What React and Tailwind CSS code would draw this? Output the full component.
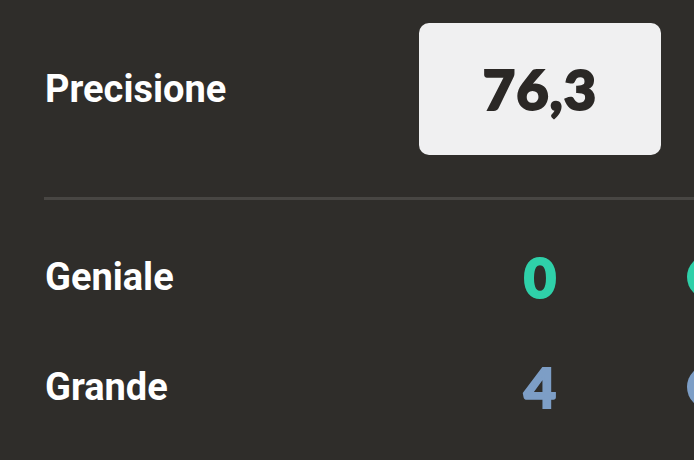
export default function App() {
  const label = { fontFamily: "Roboto, 'Liberation Sans', sans-serif" };
  const num = { fontFamily: "Lato, 'DejaVu Sans', sans-serif" };
  return (
    <div className="w-[694px] h-[460px] overflow-hidden bg-[#2f2d2a] pt-[23px]">
      <div className="grid grid-cols-[374px_242px_1fr] items-center pl-[45px]">
        <div style={label} className="text-[38px] font-bold text-white leading-none">Precisione</div>
        <div className="h-[132px] rounded-[10px] bg-[#f0f0f1] flex items-center justify-center">
          <span style={num} className="text-[56px] font-black text-[#2b2826] leading-none tracking-[1px] [-webkit-text-stroke:2px_#2b2826]">76,3</span>
        </div>
        <div />
      </div>
      <div className="ml-[44px] mt-[42px] h-[3px] bg-[#484643]" />
      <div className="mt-[49px] flex flex-col gap-[66px]">
        {[
          { name: "Geniale", v: "0", c: "text-[#2fd0a9] [-webkit-text-stroke:2px_#2fd0a9]", b: "bg-[#2fd0a9]" },
          { name: "Grande", v: "4", c: "text-[#7d9ec6] [-webkit-text-stroke:2px_#7d9ec6]", b: "bg-[#7d9ec6]" },
        ].map((r) => (
          <div key={r.name} className="grid grid-cols-[374px_242px_1fr] items-center pl-[45px] h-[44px]">
            <div style={label} className="text-[38px] font-bold text-white leading-none">{r.name}</div>
            <div className="flex justify-center">
              <span style={num} className={`text-[56px] font-black leading-none ${r.c}`}>{r.v}</span>
            </div>
            <div className="pl-[26px]">
              <div className={`w-[44px] h-[44px] rounded-full ${r.b}`} />
            </div>
          </div>
        ))}
      </div>
    </div>
  );
}
